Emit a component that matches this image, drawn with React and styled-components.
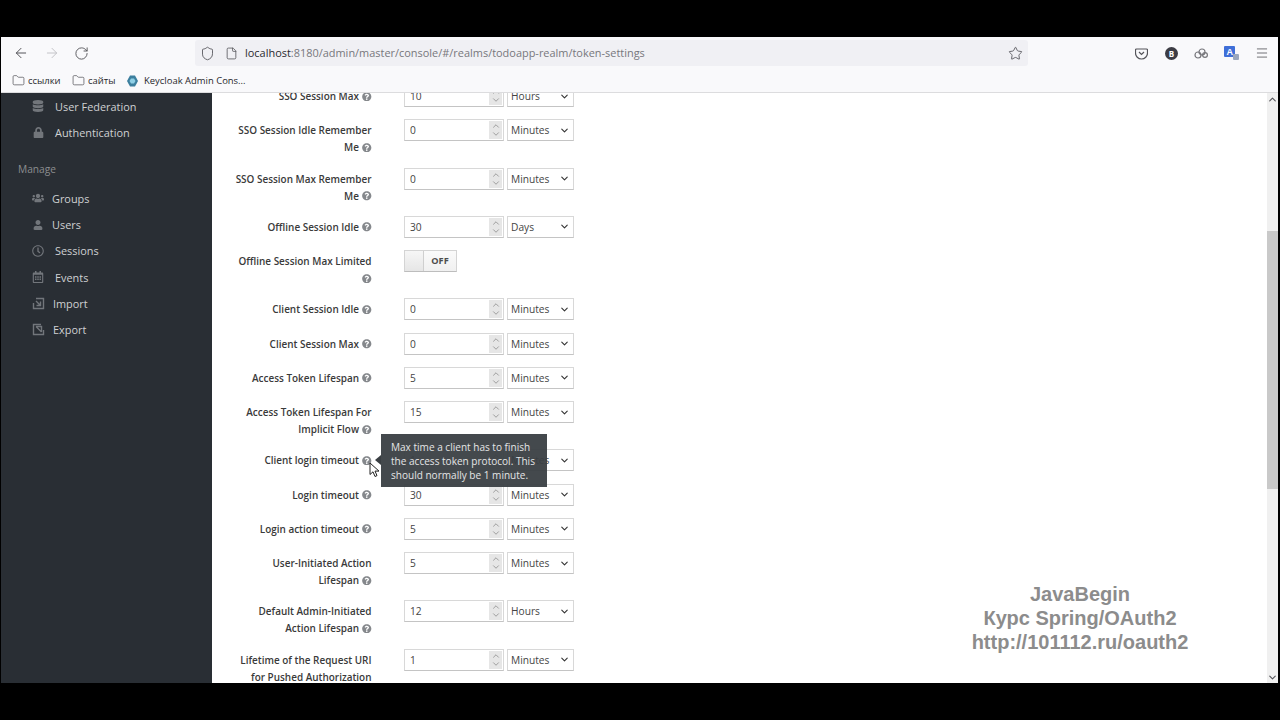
import React from 'react'
import styled, { createGlobalStyle } from 'styled-components'
import { ArrowLeft, ArrowRight, RotateCw, Shield, Star, Menu, Folder, File, ChevronDown, ChevronUp } from 'lucide-react'
import { FaDatabase, FaLock, FaUsers, FaUser, FaRegClock, FaRegCalendarAlt, FaQuestionCircle } from 'react-icons/fa'

const GlobalStyle = createGlobalStyle`
  html, body { margin: 0; padding: 0; background: #000; }
  body { font-family: "Open Sans", "Liberation Sans", sans-serif; }
`

const Page = styled.div`
  position: relative;
  width: 1280px;
  height: 720px;
  box-sizing: border-box;
  padding: 37px 2px 37px 1px;
  background: #000;
  overflow: hidden;
`

const Browser = styled.div`
  display: flex;
  flex-direction: column;
  height: 646px;
  background: #fff;
  overflow: hidden;
`

const NavBar = styled.div`
  display: flex;
  align-items: center;
  height: 32px;
  flex: none;
  background: #f9f9fb;
  color: #4f4f54;
`

const NavButtons = styled.div`
  display: flex;
  align-items: center;
  gap: 14.5px;
  width: 194px;
  padding-left: 12px;
  box-sizing: border-box;
`

const NavIcon = styled.span`
  display: flex;
  color: ${props => props.faded ? '#c4c4c8' : '#55555a'};
`

const UrlBar = styled.div`
  display: flex;
  align-items: center;
  width: 833px;
  height: 26px;
  padding-left: 5px;
  box-sizing: border-box;
  background: #f0f0f4;
  border-radius: 3px;
`

const UrlText = styled.span`
  margin: 0 0 1px 7px;
  font-size: 10.95px;
  color: #77777c;
  white-space: nowrap;
  b { font-weight: 400; color: #2b2b30; }
`

const UrlEnd = styled.span`
  display: flex;
  margin-left: auto;
  margin-right: 5px;
`

const ToolIcons = styled.div`
  display: flex;
  align-items: center;
  margin-left: 107px;
  gap: 15px;
`

const Avatar = styled.span`
  display: flex;
  align-items: center;
  justify-content: center;
  width: 13px;
  height: 13px;
  margin-left: 2px;
  border-radius: 50%;
  background: #3c3c44;
  color: #fff;
  font-size: 8px;
  font-weight: 700;
`

const BookmarkBar = styled.div`
  display: flex;
  align-items: center;
  flex: none;
  height: 23px;
  padding-left: 11px;
  gap: 11.5px;
  background: #f9f9fb;
  border-bottom: 1px solid #dcdcde;
`

const Bookmark = styled.span`
  display: flex;
  align-items: center;
  gap: ${props => props.gap || 3}px;
  font-size: 9.45px;
  color: #26262a;
  white-space: nowrap;
`

const Shell = styled.div`
  display: flex;
  flex: 1;
  min-height: 0;
`

const Sidebar = styled.aside`
  width: 211px;
  flex: none;
  background: #292e34;
`

const NavGroup = styled.div`
  display: flex;
  flex-direction: column;
  margin-top: ${props => props.top || 0}px;
`

const SideItem = styled.div`
  display: flex;
  align-items: center;
  height: 26.2px;
  padding-left: 30px;
  font-size: 10.9px;
  color: #cfd1d3;
`

const SideIcon = styled.span`
  display: flex;
  justify-content: center;
  width: 14px;
  margin-right: ${props => props.gap}px;
  color: #72767b;
`

const SideHeading = styled.div`
  margin: 16px 0 0 17px;
  height: 17px;
  line-height: 17px;
  font-size: 10.2px;
  color: #8b8d8f;
`

const Main = styled.main`
  position: relative;
  flex: 1;
  min-width: 0;
  overflow: hidden;
  background: #fff;
`

const Form = styled.div`
  display: flex;
  flex-direction: column;
  gap: 12.25px;
  margin-top: -8px;
  padding-left: 19px;
`

const Row = styled.div`
  position: relative;
  display: flex;
  align-items: flex-start;
  flex: none;
  height: ${props => props.tall ? 36 : 22}px;
`

const Label = styled.label`
  width: 140.5px;
  flex: none;
  padding-top: 3px;
  text-align: right;
  font-size: 9.95px;
  font-weight: 600;
  line-height: 17px;
  color: #3a3a3a;
`

const Help = styled(FaQuestionCircle)`
  width: 9.5px;
  height: 9.5px;
  margin-left: 3px;
  vertical-align: -1px;
  color: #85888c;
`

const Controls = styled.div`
  display: flex;
  gap: 3px;
  margin-left: 32.5px;
`

const NumberBox = styled.div`
  display: flex;
  align-items: center;
  width: 100px;
  height: 22px;
  box-sizing: border-box;
  padding: 0 1px 0 5px;
  border: 1px solid #d8d8d8;
  border-bottom-color: #c4c4c4;
  background: #fff;
`

const NumberInput = styled.input`
  flex: 1;
  min-width: 0;
  padding: 0;
  border: 0;
  outline: 0;
  background: none;
  font: 10.2px "Open Sans", sans-serif;
  color: #444;
`

const Spinner = styled.span`
  display: flex;
  flex-direction: column;
  align-items: center;
  justify-content: center;
  gap: 0;
  width: 13px;
  height: 18px;
  background: #e6e6e6;
  color: #808080;
  svg { margin: -1px 0; }
`

const SelectBox = styled.div`
  display: flex;
  align-items: center;
  justify-content: space-between;
  width: 67px;
  height: 22px;
  box-sizing: border-box;
  padding: 0 3px 0 3px;
  border: 1px solid #d8d8d8;
  border-bottom-color: #c4c4c4;
  background: #fff;
  font-size: 10.2px;
  color: #444;
`

const Switch = styled.div`
  display: flex;
  width: 53px;
  height: 22px;
  box-sizing: border-box;
  border: 1px solid #d4d4d4;
  border-bottom-color: #bdbdbd;
`

const SwitchKnob = styled.span`
  width: 18px;
  border-right: 1px solid #cfcfcf;
  background: linear-gradient(#f6f6f6, #e6e6e6);
`

const SwitchText = styled.span`
  flex: 1;
  text-align: center;
  line-height: 20px;
  font-size: 9.2px;
  font-weight: 700;
  color: #4d4d4d;
  background: linear-gradient(#fafafa, #f0f0f0);
`

const Tooltip = styled.div`
  position: absolute;
  z-index: 2;
  left: 150px;
  top: -15px;
  width: 166px;
  height: 53px;
  box-sizing: border-box;
  padding: 7px 4px 0 10px;
  background: rgba(58, 63, 67, 0.95);
  color: #e4e5e6;
  font-size: 10.05px;
  line-height: 13.8px;
  &::before {
    content: "";
    position: absolute;
    left: -6px;
    top: 21px;
    border-style: solid;
    border-width: 5px 6px 5px 0;
    border-color: transparent #3a3f43 transparent transparent;
  }
`

const Cursor = styled.svg`
  position: absolute;
  left: 369px;
  top: 462px;
`

const Scrollbar = styled.div`
  position: absolute;
  top: 0;
  right: 0;
  bottom: 0;
  width: 11px;
  background: #f0f0f0;
`

const ScrollThumb = styled.div`
  position: absolute;
  top: 138px;
  left: 0;
  right: 0;
  height: 258px;
  background: #c9c9c9;
`

const ScrollArrow = styled.span`
  position: absolute;
  left: 0;
  display: flex;
  color: #55555a;
  ${props => props.bottom ? 'bottom: 0;' : 'top: 1px;'}
`

const Watermark = styled.div`
  position: absolute;
  left: 940px;
  top: 582px;
  width: 280px;
  text-align: center;
  font-family: "Liberation Sans", Arial, sans-serif;
  font-size: 20px;
  font-weight: 700;
  line-height: 24px;
  color: #8c8c8c;
`

const configureItems = [
  { name: 'User Federation', icon: <FaDatabase size={12} />, gap: 10 },
  { name: 'Authentication', icon: <FaLock size={11} />, gap: 10 }
]

const ImportIcon = () => (
  <svg width="13" height="13" viewBox="0 0 13 13" fill="none" stroke="#72767b" strokeWidth="1.4">
    <path d="M4 1.5h7.5v10H1.5V6" />
    <path d="M8.5 4.5v4h-4M8.5 8.5L4 4" />
  </svg>
)

const ExportIcon = () => (
  <svg width="13" height="13" viewBox="0 0 13 13" fill="none" stroke="#72767b" strokeWidth="1.4">
    <path d="M11.5 7v4.5h-10v-10H9" />
    <path d="M4 3.5h5.5v5.5M9.5 9L4 3.5" />
  </svg>
)

const manageItems = [
  { name: 'Groups', icon: <FaUsers size={12} />, gap: 7 },
  { name: 'Users', icon: <FaUser size={10} />, gap: 7 },
  { name: 'Sessions', icon: <FaRegClock size={12} />, gap: 10 },
  { name: 'Events', icon: <FaRegCalendarAlt size={12} />, gap: 10 },
  { name: 'Import', icon: <ImportIcon />, gap: 8 },
  { name: 'Export', icon: <ExportIcon />, gap: 8 }
]

const rows = [
  { label: 'SSO Session Max', value: '10', unit: 'Hours' },
  { label: 'SSO Session Idle Remember Me', value: '0', unit: 'Minutes', tall: true },
  { label: 'SSO Session Max Remember Me', value: '0', unit: 'Minutes', tall: true },
  { label: 'Offline Session Idle', value: '30', unit: 'Days' },
  { label: 'Offline Session Max Limited', toggle: true, tall: true },
  { label: 'Client Session Idle', value: '0', unit: 'Minutes' },
  { label: 'Client Session Max', value: '0', unit: 'Minutes' },
  { label: 'Access Token Lifespan', value: '5', unit: 'Minutes' },
  { label: 'Access Token Lifespan For Implicit Flow', value: '15', unit: 'Minutes', tall: true },
  { label: 'Client login timeout', value: '1', unit: 'Minutes', tip: true },
  { label: 'Login timeout', value: '30', unit: 'Minutes' },
  { label: 'Login action timeout', value: '5', unit: 'Minutes' },
  { label: 'User-Initiated Action Lifespan', value: '5', unit: 'Minutes', tall: true },
  { label: 'Default Admin-Initiated Action Lifespan', value: '12', unit: 'Hours', tall: true },
  { label: 'Lifetime of the Request URI for Pushed Authorization Request', value: '1', unit: 'Minutes', tall: true }
]

const FormRow = ({ row }) => (
  <Row tall={row.tall}>
    <Label>{row.label}<Help /></Label>
    <Controls>
      {row.toggle ? (
        <Switch>
          <SwitchKnob />
          <SwitchText>OFF</SwitchText>
        </Switch>
      ) : (
        <>
          <NumberBox>
            <NumberInput readOnly value={row.value} />
            <Spinner>
              <ChevronUp size={10} strokeWidth={1.7} />
              <ChevronDown size={10} strokeWidth={1.7} />
            </Spinner>
          </NumberBox>
          <SelectBox>
            {row.unit}
            <ChevronDown size={11} strokeWidth={2.4} color="#333" />
          </SelectBox>
        </>
      )}
    </Controls>
    {row.tip && (
      <Tooltip>Max time a client has to finish the access token protocol. This should normally be 1 minute.</Tooltip>
    )}
  </Row>
)

const App = () => (
  <Page>
    <GlobalStyle />
    <Browser>
      <NavBar>
        <NavButtons>
          <NavIcon><ArrowLeft size={16} strokeWidth={1.5} /></NavIcon>
          <NavIcon faded><ArrowRight size={16} strokeWidth={1.5} /></NavIcon>
          <NavIcon><RotateCw size={15} strokeWidth={1.5} /></NavIcon>
        </NavButtons>
        <UrlBar>
          <Shield size={15} strokeWidth={1.4} color="#55555a" />
          <File size={13} strokeWidth={1.5} color="#55555a" style={{ marginLeft: 10 }} />
          <UrlText><b>localhost</b>:8180/admin/master/console/#/realms/todoapp-realm/token-settings</UrlText>
          <UrlEnd><Star size={15} strokeWidth={1.4} color="#55555a" /></UrlEnd>
        </UrlBar>
        <ToolIcons>
          <svg width="13" height="13" viewBox="0 0 13 13" fill="none" stroke="#55555a" strokeWidth="1.2">
            <path d="M1.5 2h10a1 1 0 0 1 1 1v3a6 6 0 0 1-12 0V3a1 1 0 0 1 1-1z" />
            <path d="M4 5l2.500 2.500L9 5" />
          </svg>
          <Avatar>B</Avatar>
          <svg width="16" height="13" viewBox="0 0 16 13" fill="none" stroke="#77777c" strokeWidth="1.2">
            <circle cx="5" cy="8" r="3" />
            <circle cx="9" cy="5" r="3" />
            <circle cx="12" cy="8" r="2.400" />
          </svg>
          <svg width="16" height="15" viewBox="0 0 16 15">
            <rect x="0" y="0" width="11" height="11" rx="1" fill="#3f6fd8" />
            <text x="2.500" y="9" fontSize="9" fontWeight="700" fill="#fff" fontFamily="Liberation Sans">A</text>
            <rect x="9" y="8" width="6" height="6" rx="1" fill="#9aa7bd" />
          </svg>
          <Menu size={14} strokeWidth={1.4} color="#55555a" />
        </ToolIcons>
      </NavBar>
      <BookmarkBar>
        <Bookmark><Folder size={13} strokeWidth={1.3} color="#4f4f54" />ссылки</Bookmark>
        <Bookmark><Folder size={13} strokeWidth={1.3} color="#4f4f54" />сайты</Bookmark>
        <Bookmark gap={6}>
          <svg width="11" height="12" viewBox="0 0 11 12">
            <path d="M3 0.500h5l3 5.500-3 5.500H3L0 6z" fill="#3c7f9e" />
            <path d="M4 3.500h3l1.500 2.500L7 8.500H4L2.500 6z" fill="#8fd0e6" />
          </svg>
          Keycloak Admin Cons...
        </Bookmark>
      </BookmarkBar>
      <Shell>
        <Sidebar>
          <NavGroup>
            {configureItems.map(item => (
              <SideItem key={item.name}>
                <SideIcon gap={item.gap}>{item.icon}</SideIcon>{item.name}
              </SideItem>
            ))}
          </NavGroup>
          <SideHeading>Manage</SideHeading>
          <NavGroup top={7}>
            {manageItems.map(item => (
              <SideItem key={item.name}>
                <SideIcon gap={item.gap}>{item.icon}</SideIcon>{item.name}
              </SideItem>
            ))}
          </NavGroup>
        </Sidebar>
        <Main>
          <Form>
            {rows.map(row => <FormRow key={row.label} row={row} />)}
          </Form>
          <Scrollbar>
            <ScrollArrow><ChevronUp size={11} strokeWidth={2.4} /></ScrollArrow>
            <ScrollThumb />
            <ScrollArrow bottom="true"><ChevronDown size={11} strokeWidth={2.4} /></ScrollArrow>
          </Scrollbar>
        </Main>
      </Shell>
    </Browser>
    <Cursor width="11" height="16" viewBox="0 0 11 16">
      <path d="M1 1v11.500l3-2.700 2 4.700 2-.9-2-4.500h4z" fill="#fff" stroke="#222" strokeWidth="1" />
    </Cursor>
    <Watermark>JavaBegin<br />Курс Spring/OAuth2<br />http://101112.ru/oauth2</Watermark>
  </Page>
)

export default App
